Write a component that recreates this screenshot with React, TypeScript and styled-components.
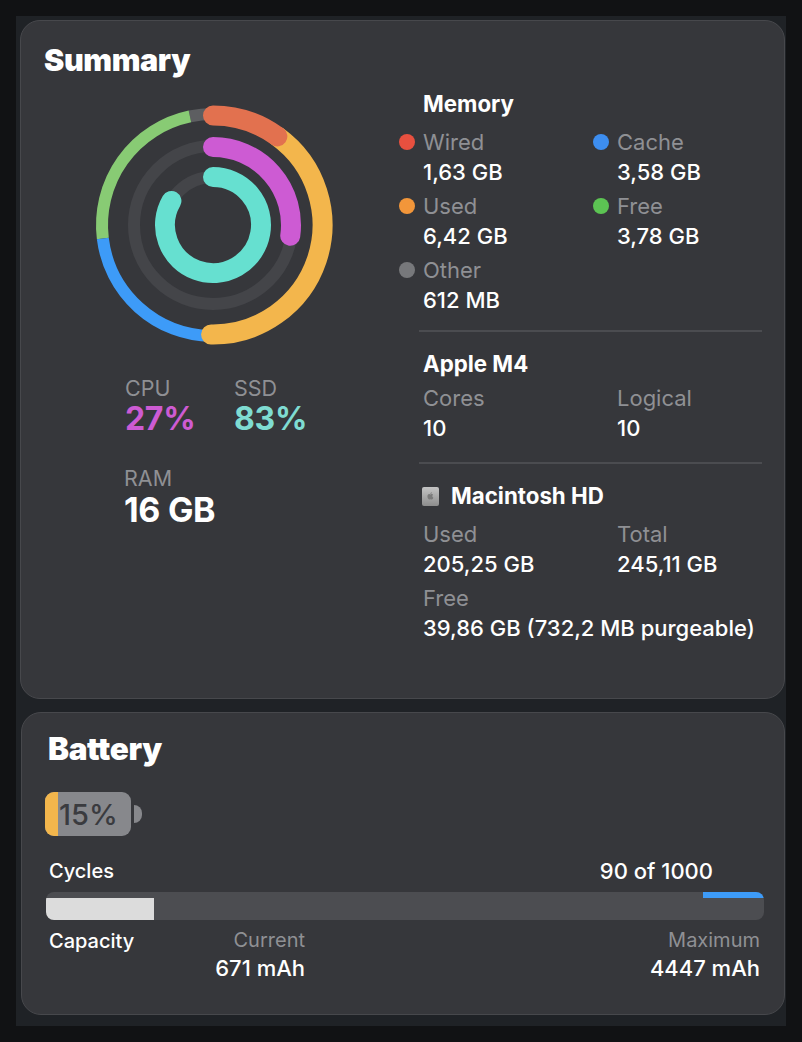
import React from 'react';
import styled, { createGlobalStyle } from 'styled-components';

const GlobalStyle = createGlobalStyle`
    html, body {
        margin: 0;
        padding: 0;
        background: #111214;
    }
    body {
        font-family: Inter, "Liberation Sans", sans-serif;
        -webkit-font-smoothing: antialiased;
    }
`;

const Page = styled.div`
    width: 802px;
    height: 1042px;
    box-sizing: border-box;
    padding: 16px;
    background: #111214;
`;

const Window = styled.div`
    width: 770px;
    height: 1010px;
    box-sizing: border-box;
    padding: 4px 1px 0 4px;
    background: #1f2226;
    display: flex;
    flex-direction: column;
    gap: 13px;
`;

const Card = styled.section<{ $height: number; $inset?: number }>`
    height: ${(p) => p.$height}px;
    margin-left: ${(p) => p.$inset ?? 0}px;
    box-sizing: border-box;
    background: #36373b;
    border: 1.5px solid #47484c;
    border-radius: 20px;
    color: #fff;
`;

const SummaryBody = styled.div`
    display: grid;
    grid-template-columns: 375px 1fr;
    padding: 21px 22px 0 23px;
`;

const Title = styled.h2<{ $size: number; $left?: number }>`
    margin: 0 0 0 ${(p) => p.$left ?? 0}px;
    font-size: ${(p) => p.$size}px;
    line-height: 35px;
    font-weight: 900;
    letter-spacing: -0.4px;
`;

const LeftColumn = styled.div`
    display: flex;
    flex-direction: column;
`;

const RingWrap = styled.div`
    margin: 25.5px 0 0 49px;
    height: 244px;
`;

const Stats = styled.div`
    margin: 29px 0 0 81px;
    display: grid;
    grid-template-columns: 109px auto;
    justify-content: start;
`;

const BigStat = styled.div`
    display: flex;
    flex-direction: column;
`;

const StatLabel = styled.span`
    font-size: 21.5px;
    line-height: 24px;
    color: #8f9094;
`;

const StatValue = styled.span<{ $color: string }>`
    font-size: 32px;
    line-height: 38px;
    font-weight: 700;
    letter-spacing: -0.3px;
    color: ${(p) => p.$color};
`;

const RamStat = styled.div`
    margin: 28px 0 0 80px;
    display: flex;
    flex-direction: column;
`;

const RamValue = styled.span`
    font-size: 34px;
    line-height: 40px;
    font-weight: 700;
    letter-spacing: -0.3px;
    color: #fff;
`;

const RightColumn = styled.div`
    display: flex;
    flex-direction: column;
    padding-top: 47px;
`;

const Section = styled.div<{ $pad: number; $top: number }>`
    padding: ${(p) => p.$top}px 0 ${(p) => p.$pad}px 4px;
`;

const Divider = styled.div`
    height: 2px;
    background: #4b4c50;
`;

const SectionTitle = styled.h3<{ $gap: number }>`
    margin: 0 0 ${(p) => p.$gap}px;
    font-size: 22.3px;
    line-height: 30px;
    font-weight: 700;
    display: flex;
    align-items: center;
    gap: 12px;
`;

const Grid = styled.div`
    display: grid;
    grid-template-columns: 194px 1fr;
    row-gap: 4px;
`;

const Item = styled.div`
    position: relative;
    display: flex;
    flex-direction: column;
`;

const Label = styled.span`
    font-size: 22px;
    line-height: 30px;
    color: #8f9094;
`;

const Value = styled.span`
    font-size: 22px;
    line-height: 30px;
    font-weight: 500;
    color: #fff;
    white-space: nowrap;
`;

const Dot = styled.span<{ $color: string }>`
    position: absolute;
    left: -24px;
    top: 7px;
    width: 16px;
    height: 16px;
    border-radius: 50%;
    background: ${(p) => p.$color};
`;

const DiskIcon = styled.span`
    width: 17px;
    height: 19px;
    margin-left: -1px;
    border-radius: 2px;
    background: linear-gradient(#c4c4c4, #8d8d8d);
    display: inline-flex;
    align-items: center;
    justify-content: center;
`;

const BatteryBody = styled.div`
    padding: 18px 24px 0 24px;
`;

const BatteryIcon = styled.div`
    margin: 26px 0 0 -1px;
    display: flex;
    align-items: center;
    gap: 3px;
`;

const BatteryShell = styled.div`
    width: 86px;
    height: 44px;
    border-radius: 9px;
    background: #87888c;
    overflow: hidden;
    display: flex;
    align-items: center;
`;

const BatteryLevel = styled.div`
    width: 13px;
    height: 100%;
    background: #f3b64c;
`;

const BatteryText = styled.span`
    font-size: 29px;
    font-weight: 500;
    color: #3a3b3f;
    margin-left: 1px;
`;

const BatteryTip = styled.div`
    width: 8px;
    height: 18px;
    border-radius: 0 9px 9px 0;
    background: #87888c;
`;

const CycleRow = styled.div`
    margin-top: 20px;
    display: flex;
    justify-content: space-between;
    padding: 0 47px 0 3px;
`;

const SmallValue = styled.span`
    font-size: 20px;
    line-height: 30px;
    font-weight: 500;
    color: #fff;
`;

const Bar = styled.div`
    position: relative;
    height: 28px;
    margin: 6px -4px 0 0;
    background: #4c4d51;
    border-radius: 8px;
    overflow: hidden;
`;

const CapacityFill = styled.div<{ $percent: number }>`
    position: absolute;
    left: 0;
    top: 6px;
    bottom: 0;
    width: ${(p) => p.$percent}%;
    background: #dcdcdc;
`;

const CycleFill = styled.div<{ $percent: number }>`
    position: absolute;
    right: 0;
    top: 0;
    height: 6px;
    width: ${(p) => p.$percent}%;
    background: #3d9bf8;
`;

const CapacityRow = styled.div`
    margin-top: 6px;
    display: grid;
    grid-template-columns: 160px 96px 1fr;
    padding: 0 0 0 3px;
`;

const EndItem = styled(Item)`
    align-items: flex-end;
    padding-top: 1px;
`;

const CapLabel = styled.span`
    font-size: 20px;
    line-height: 27px;
    color: #8f9094;
`;

const CapValue = styled(Value)`
    line-height: 27px;
    margin-top: 1px;
`;

const CX = 120;
const CY = 122;

const polar = (r: number, deg: number) => {
    const a = ((deg - 90) * Math.PI) / 180;
    return [CX + r * Math.cos(a), CY + r * Math.sin(a)];
};

const arc = (r: number, from: number, to: number) => {
    const [x1, y1] = polar(r, from);
    const [x2, y2] = polar(r, to);
    const large = to - from > 180 ? 1 : 0;
    return `M ${x1} ${y1} A ${r} ${r} 0 ${large} 1 ${x2} ${y2}`;
};

const Rings: React.FC = () => (
    <svg width="240" height="244" viewBox="0 0 240 244" fill="none">
        <circle cx={CX} cy={CY} r={79} stroke="#444549" strokeWidth={12} />
        <circle cx={CX} cy={CY} r={48} stroke="#444549" strokeWidth={12} />
        <path d={arc(111, 348, 360)} stroke="#5d5e61" strokeWidth={12} />
        <path d={arc(111, 263, 348)} stroke="#88cb74" strokeWidth={12} />
        <path d={arc(111, 181, 263)} stroke="#3d9bf8" strokeWidth={12} />
        <path d={arc(109.5, 36, 181)} stroke="#f3b64c" strokeWidth={20} strokeLinecap="round" />
        <path d={arc(109.5, 0, 36)} stroke="#e2714f" strokeWidth={20} strokeLinecap="round" />
        <path d={arc(78, 0, 98)} stroke="#cd5bd3" strokeWidth={20} strokeLinecap="round" />
        <path d={arc(48, 0, 300)} stroke="#66e0d0" strokeWidth={20} strokeLinecap="round" />
    </svg>
);

const memory = [
    { label: 'Wired', value: '1,63 GB', color: '#e8503f' },
    { label: 'Cache', value: '3,58 GB', color: '#3d8ef0' },
    { label: 'Used', value: '6,42 GB', color: '#f2963a' },
    { label: 'Free', value: '3,78 GB', color: '#5cc453' },
    { label: 'Other', value: '612 MB', color: '#77787b' },
];

const App: React.FC = () => (
    <Page>
        <GlobalStyle />
        <Window>
            <Card $height={679}>
                <SummaryBody>
                    <LeftColumn>
                        <Title $size={30.5}>Summary</Title>
                        <RingWrap>
                            <Rings />
                        </RingWrap>
                        <Stats>
                            <BigStat>
                                <StatLabel>CPU</StatLabel>
                                <StatValue $color="#cd5bd3">27%</StatValue>
                            </BigStat>
                            <BigStat>
                                <StatLabel>SSD</StatLabel>
                                <StatValue $color="#7fdcd2">83%</StatValue>
                            </BigStat>
                        </Stats>
                        <RamStat>
                            <StatLabel>RAM</StatLabel>
                            <RamValue>16 GB</RamValue>
                        </RamStat>
                    </LeftColumn>
                    <RightColumn>
                        <Section $top={0} $pad={15}>
                            <SectionTitle $gap={8}>Memory</SectionTitle>
                            <Grid>
                                {memory.map((m) => (
                                    <Item key={m.label}>
                                        <Dot $color={m.color} />
                                        <Label>{m.label}</Label>
                                        <Value>{m.value}</Value>
                                    </Item>
                                ))}
                            </Grid>
                        </Section>
                        <Divider />
                        <Section $top={17} $pad={19}>
                            <SectionTitle $gap={4}>Apple M4</SectionTitle>
                            <Grid>
                                <Item>
                                    <Label>Cores</Label>
                                    <Value>10</Value>
                                </Item>
                                <Item>
                                    <Label>Logical</Label>
                                    <Value>10</Value>
                                </Item>
                            </Grid>
                        </Section>
                        <Divider />
                        <Section $top={17} $pad={0}>
                            <SectionTitle $gap={8}>
                                <DiskIcon>
                                    <svg width="9" height="10" viewBox="0 0 24 24" fill="#7a7a7a">
                                        <path d="M17 12.5c0-2.500 2-3.600 2.100-3.700-1.200-1.700-3-1.900-3.600-2-1.500-.2-3 .9-3.700.9-.8 0-2-.9-3.200-.8-1.700 0-3.200 1-4 2.400-1.700 3-.4 7.400 1.200 9.800.8 1.200 1.800 2.500 3.100 2.400 1.200 0 1.700-.8 3.200-.8s1.900.8 3.200.8 2.200-1.200 3-2.400c.9-1.400 1.300-2.700 1.300-2.800-.1 0-2.600-1-2.600-3.800zM14.600 5.200c.7-.8 1.100-1.900 1-3-1 0-2.100.6-2.800 1.400-.6.700-1.200 1.900-1 2.900 1.100.1 2.200-.5 2.800-1.300z" />
                                    </svg>
                                </DiskIcon>
                                Macintosh HD
                            </SectionTitle>
                            <Grid>
                                <Item>
                                    <Label>Used</Label>
                                    <Value>205,25 GB</Value>
                                </Item>
                                <Item>
                                    <Label>Total</Label>
                                    <Value>245,11 GB</Value>
                                </Item>
                                <Item>
                                    <Label>Free</Label>
                                    <Value>39,86 GB (732,2 MB purgeable)</Value>
                                </Item>
                            </Grid>
                        </Section>
                    </RightColumn>
                </SummaryBody>
            </Card>
            <Card $height={303} $inset={1}>
                <BatteryBody>
                    <Title $size={31.5} $left={2}>Battery</Title>
                    <BatteryIcon>
                        <BatteryShell>
                            <BatteryLevel />
                            <BatteryText>15%</BatteryText>
                        </BatteryShell>
                        <BatteryTip />
                    </BatteryIcon>
                    <CycleRow>
                        <SmallValue>Cycles</SmallValue>
                        <Value>90 of 1000</Value>
                    </CycleRow>
                    <Bar>
                        <CapacityFill $percent={15} />
                        <CycleFill $percent={8.5} />
                    </Bar>
                    <CapacityRow>
                        <SmallValue>Capacity</SmallValue>
                        <EndItem>
                            <CapLabel>Current</CapLabel>
                            <CapValue>671 mAh</CapValue>
                        </EndItem>
                        <EndItem>
                            <CapLabel>Maximum</CapLabel>
                            <CapValue>4447 mAh</CapValue>
                        </EndItem>
                    </CapacityRow>
                </BatteryBody>
            </Card>
        </Window>
    </Page>
);

export default App;
